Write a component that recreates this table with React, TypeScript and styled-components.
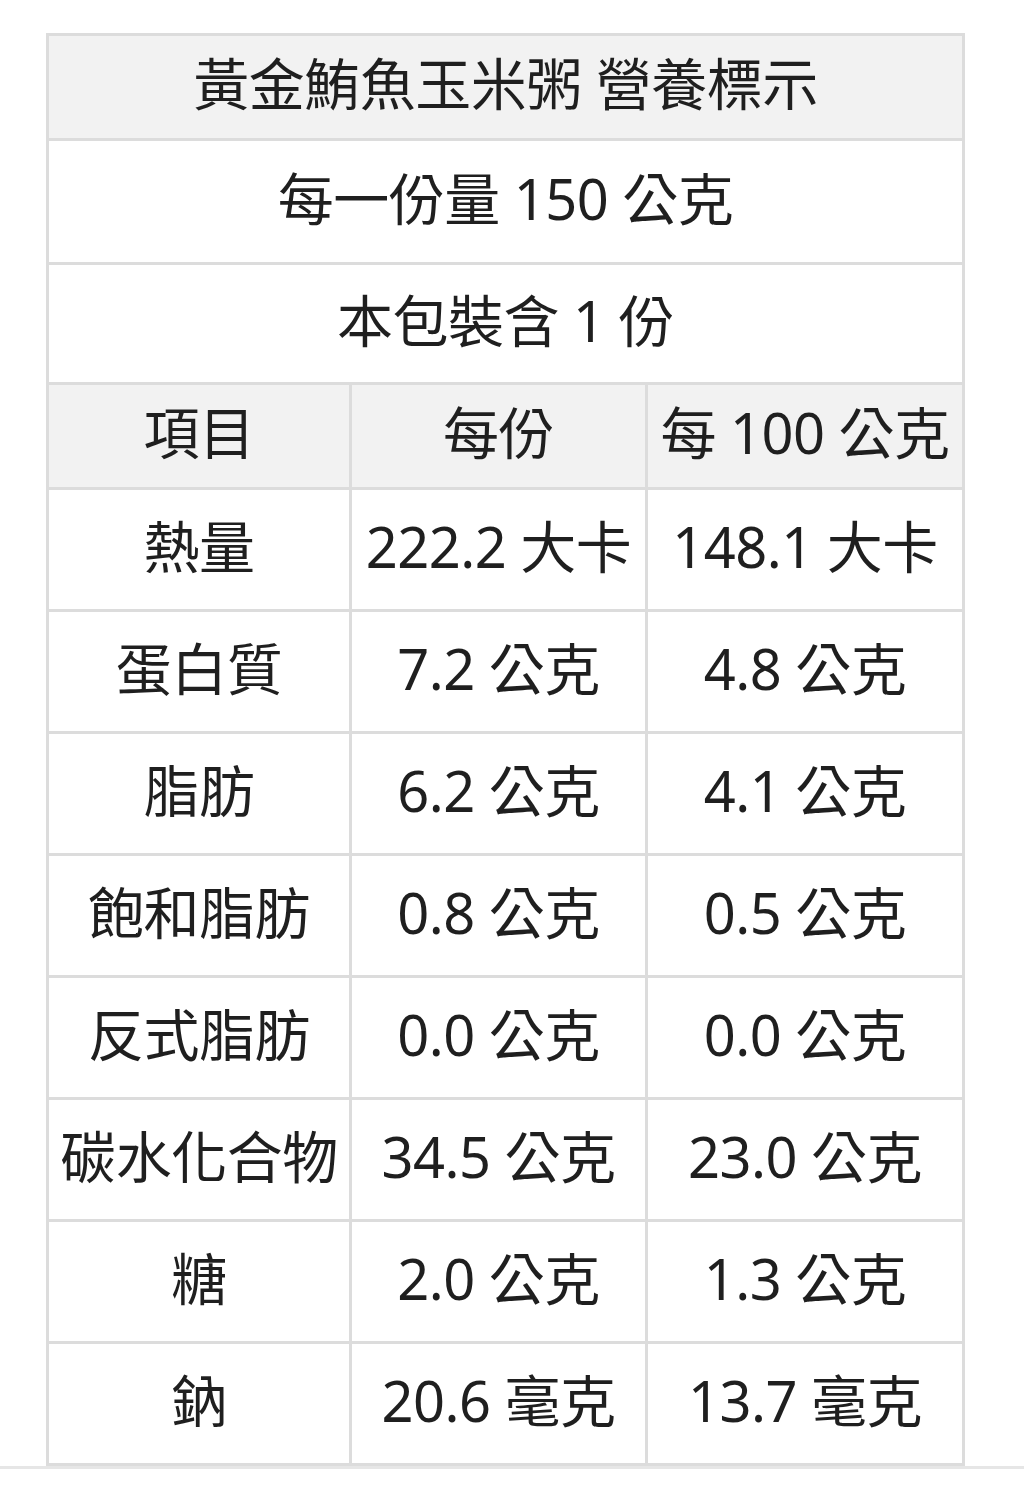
import { FC } from "react";
import styled, { createGlobalStyle } from "styled-components";

const GlobalStyle = createGlobalStyle`
  html, body {
    margin: 0;
    padding: 0;
    background: #fff;
  }
  body {
    font-family: "Noto Sans", "Noto Sans CJK TC", sans-serif;
    color: #222;
  }
`;

const Page = styled.div`
  padding: 33px 0 0 46px;
  border-bottom: 3px solid #e6e6e6;
`;

const Table = styled.table`
  border-collapse: collapse;
  width: 916px;
  table-layout: fixed;
  font-size: 56px;
  line-height: 1.2;
`;

const Cell = styled.td<{ $head?: boolean; $h: number }>`
  border: 3px solid #dcdcdc;
  background: ${(p) => (p.$head ? "#f2f2f2" : "#fff")};
  height: ${(p) => p.$h}px;
  padding: 0 0 6px;
  text-align: center;
  vertical-align: middle;
  white-space: nowrap;
  color: #1f1f1f;
  font-weight: 400;
  letter-spacing: -0.5px;
`;

interface IRow {
  name: string;
  per: string;
  per100: string;
}

const rows: IRow[] = [
  { name: "熱量", per: "222.2 大卡", per100: "148.1 大卡" },
  { name: "蛋白質", per: "7.2 公克", per100: "4.8 公克" },
  { name: "脂肪", per: "6.2 公克", per100: "4.1 公克" },
  { name: "飽和脂肪", per: "0.8 公克", per100: "0.5 公克" },
  { name: "反式脂肪", per: "0.0 公克", per100: "0.0 公克" },
  { name: "碳水化合物", per: "34.5 公克", per100: "23.0 公克" },
  { name: "糖", per: "2.0 公克", per100: "1.3 公克" },
  { name: "鈉", per: "20.6 毫克", per100: "13.7 毫克" },
];

const App: FC = () => {
  return (
    <>
      <GlobalStyle />
      <Page>
        <Table>
          <colgroup>
            <col style={{ width: 303 }} />
            <col style={{ width: 296 }} />
            <col style={{ width: 317 }} />
          </colgroup>
          <tbody>
            <tr>
              <Cell as="th" colSpan={3} $head $h={96}>
                黃金鮪魚玉米粥 營養標示
              </Cell>
            </tr>
            <tr>
              <Cell colSpan={3} $h={115}>每一份量 150 公克</Cell>
            </tr>
            <tr>
              <Cell colSpan={3} $h={111}>本包裝含 1 份</Cell>
            </tr>
            <tr>
              <Cell $head $h={96}>項目</Cell>
              <Cell $head $h={96}>每份</Cell>
              <Cell $head $h={96}>每 100 公克</Cell>
            </tr>
            {rows.map((r) => (
              <tr key={r.name}>
                <Cell $h={113}>{r.name}</Cell>
                <Cell $h={113}>{r.per}</Cell>
                <Cell $h={113}>{r.per100}</Cell>
              </tr>
            ))}
          </tbody>
        </Table>
      </Page>
    </>
  );
};

export default App;
